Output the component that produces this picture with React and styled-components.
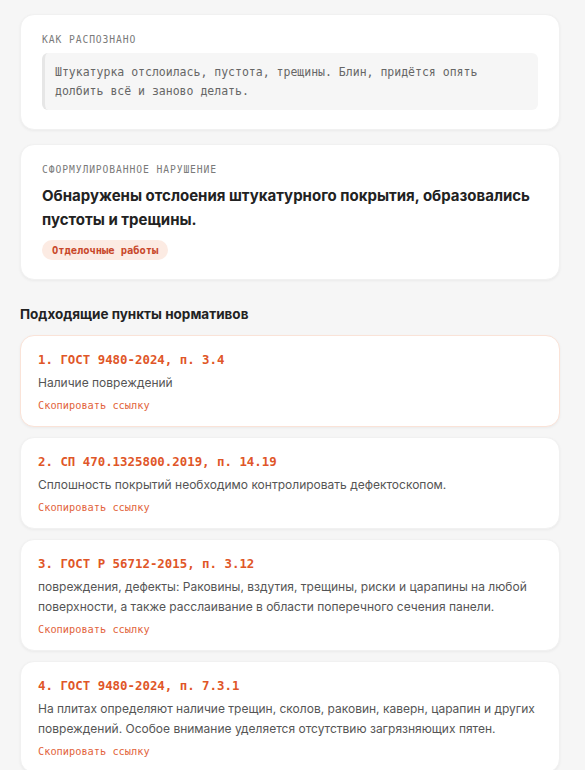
import React from "react";
import styled, { createGlobalStyle } from "styled-components";

const Global = createGlobalStyle`
  html, body { margin: 0; padding: 0; background: #f6f6f6; }
  body { font-family: Inter, Roboto, "Noto Sans", sans-serif; color: #222; }
  * { box-sizing: border-box; }
`;

const MONO = `"DejaVu Sans Mono", "Liberation Mono", monospace`;

const Page = styled.div`
  display: flex;
  flex-direction: column;
  padding: 14px 25px 20px 20px;
`;

const Card = styled.section`
  background: #fff;
  border-radius: 14px;
  padding: ${(p) => p.$pad || "19px 21px 19px 21px"};
  box-shadow: 0 1px 3px rgba(0, 0, 0, 0.05);
  border: 1px solid ${(p) => (p.$active ? "#fae3d8" : "#f1f1f1")};
  margin-bottom: ${(p) => p.$mb || "0"};
`;

const Label = styled.div`
  font-family: ${MONO};
  font-size: 9.7px;
  letter-spacing: 0.9px;
  color: #7a7a7a;
  text-transform: uppercase;
  line-height: 12px;
`;

const Quote = styled.blockquote`
  margin: 7px 0 0 0;
  background: #f6f6f6;
  border-left: 3px solid #e6e6e6;
  border-radius: 6px;
  padding: 10px 10px 10px 10px;
  font-family: ${MONO};
  font-size: 11.5px;
  line-height: 18.5px;
  color: #666;
  white-space: pre-line;
`;

const Title = styled.h2`
  margin: 8px 0 0 0;
  font-size: 15px;
  font-weight: 700;
  line-height: 23.5px;
  color: #222;
`;

const Tag = styled.span`
  display: inline-flex;
  align-items: center;
  align-self: flex-start;
  margin-top: 9px;
  height: 20px;
  padding: 0 10px;
  border-radius: 10px;
  background: #fcebe3;
  color: #c8472a;
  font-family: ${MONO};
  font-weight: 700;
  font-size: 10.4px;
  white-space: pre;
`;

const Stack = styled.div`
  display: flex;
  flex-direction: column;
`;

const SectionTitle = styled.h3`
  margin: 24px 0 11px 0;
  font-size: 13.5px;
  font-weight: 700;
  line-height: 20px;
  color: #222;
`;

const List = styled.div`
  display: flex;
  flex-direction: column;
  gap: 10px;
`;

const ItemTitle = styled.div`
  font-family: ${MONO};
  font-weight: 700;
  font-size: 12.4px;
  line-height: 16px;
  color: #df5628;
`;

const ItemText = styled.p`
  margin: 4.5px 0 0 0;
  font-size: 12px;
  line-height: 20px;
  color: #555;
`;

const CopyLink = styled.a`
  display: block;
  margin-top: 6.5px;
  font-family: ${MONO};
  font-size: 10.3px;
  line-height: 12px;
  color: #e2643c;
  cursor: pointer;
`;

const items = [
  {
    title: "1. ГОСТ 9480-2024, п. 3.4",
    text: "Наличие повреждений",
    active: true,
  },
  {
    title: "2. СП 470.1325800.2019, п. 14.19",
    text: "Сплошность покрытий необходимо контролировать дефектоскопом.",
  },
  {
    title: "3. ГОСТ Р 56712-2015, п. 3.12",
    text:
      "повреждения, дефекты: Раковины, вздутия, трещины, риски и царапины на любой поверхности, а также расслаивание в области поперечного сечения панели.",
  },
  {
    title: "4. ГОСТ 9480-2024, п. 7.3.1",
    text:
      "На плитах определяют наличие трещин, сколов, раковин, каверн, царапин и других повреждений. Особое внимание уделяется отсутствию загрязняющих пятен.",
  },
];

export default function App() {
  return (
    <>
      <Global />
      <Page>
        <Card $mb="14px">
          <Label>Как распознано</Label>
          <Quote>
            {"Штукатурка отслоилась, пустота, трещины. Блин, придётся опять\nдолбить всё и заново делать."}
          </Quote>
        </Card>
        <Card>
          <Stack>
            <Label>Сформулированное нарушение</Label>
            <Title>
              Обнаружены отслоения штукатурного покрытия, образовались пустоты
              и трещины.
            </Title>
            <Tag>Отделочные работы</Tag>
          </Stack>
        </Card>
        <SectionTitle>Подходящие пункты нормативов</SectionTitle>
        <List>
          {items.map((it) => (
            <Card key={it.title} $active={it.active} $pad="16px 17px 15px 17px">
              <ItemTitle>{it.title}</ItemTitle>
              <ItemText>{it.text}</ItemText>
              <CopyLink>Скопировать ссылку</CopyLink>
            </Card>
          ))}
        </List>
      </Page>
    </>
  );
}
